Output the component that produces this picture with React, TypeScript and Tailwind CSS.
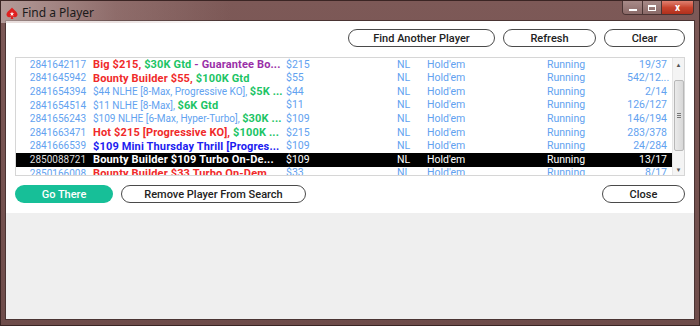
import { Fragment } from "react";

type Seg = { t: string; c: string; b?: boolean };
type Row = { id: string; name: Seg[]; buyin: string; players: string; sel?: boolean };

const BLUE = "text-[#62a2f0]";
const RED = "text-[#f02a2a]";
const GREEN = "text-[#20c465]";
const PURPLE = "text-[#9a2fa8]";
const DEEP = "text-[#1c1cf0]";

const rows: Row[] = [
  {
    id: "2841642117",
    name: [
      { t: "Big $215, ", c: RED, b: true },
      { t: "$30K Gtd", c: GREEN, b: true },
      { t: " - Guarantee Bo...", c: PURPLE, b: true },
    ],
    buyin: "$215",
    players: "19/37",
  },
  {
    id: "2841645942",
    name: [
      { t: "Bounty Builder $55, ", c: RED, b: true },
      { t: "$100K Gtd", c: GREEN, b: true },
    ],
    buyin: "$55",
    players: "542/12...",
  },
  {
    id: "2841654394",
    name: [
      { t: "$44 NLHE [8-Max, Progressive KO], ", c: BLUE },
      { t: "$5K ...", c: GREEN, b: true },
    ],
    buyin: "$44",
    players: "2/14",
  },
  {
    id: "2841654514",
    name: [
      { t: "$11 NLHE [8-Max], ", c: BLUE },
      { t: "$6K Gtd", c: GREEN, b: true },
    ],
    buyin: "$11",
    players: "126/127",
  },
  {
    id: "2841656243",
    name: [
      { t: "$109 NLHE [6-Max, Hyper-Turbo], ", c: BLUE },
      { t: "$30K ...", c: GREEN, b: true },
    ],
    buyin: "$109",
    players: "146/194",
  },
  {
    id: "2841663471",
    name: [
      { t: "Hot $215 [Progressive KO], ", c: RED, b: true },
      { t: "$100K ...", c: GREEN, b: true },
    ],
    buyin: "$215",
    players: "283/378",
  },
  {
    id: "2841666539",
    name: [{ t: "$109 Mini Thursday Thrill [Progres...", c: DEEP, b: true }],
    buyin: "$109",
    players: "24/284",
  },
  {
    id: "2850088721",
    name: [{ t: "Bounty Builder $109 Turbo On-De...", c: "text-white", b: true }],
    buyin: "$109",
    players: "13/17",
    sel: true,
  },
  {
    id: "2850166008",
    name: [{ t: "Bounty Builder $33 Turbo On-Dem...", c: RED, b: true }],
    buyin: "$33",
    players: "8/17",
  },
];

function PillButton({ label, className }: { label: string; className: string }) {
  return (
    <button
      className={`h-[18px] rounded-full border border-[#4a4a4a] bg-white text-[11px] font-medium text-[#222] leading-none ${className}`}
    >
      {label}
    </button>
  );
}

function Spade() {
  return (
    <svg width="12" height="13" viewBox="0 0 12 13">
      <path
        d="M6 0.5 C4 3 0.5 5 0.5 7.6 C0.5 9.4 2 10.4 3.4 10.2 C4.2 10.1 4.9 9.7 5.3 9.2 L4.6 12 L7.4 12 L6.7 9.2 C7.1 9.7 7.8 10.1 8.6 10.2 C10 10.4 11.5 9.4 11.5 7.6 C11.5 5 8 3 6 0.5 Z"
        fill="#e02020"
      />
      <path d="M6 4.6 L6.6 6.3 L8.3 6.3 L6.9 7.3 L7.4 9 L6 8 L4.6 9 L5.1 7.3 L3.7 6.3 L5.4 6.3 Z" fill="#fff" />
    </svg>
  );
}

export default function App() {
  return (
    <div className="w-[700px] h-[326px] flex flex-col bg-gradient-to-b from-[#7d5957] to-[#6e4c4a] border border-[#3b2524]" style={{ fontFamily: "Roboto, sans-serif" }}>
      {}
      <div className="h-[19px] flex items-start relative">
        <div className="absolute left-0 top-0 h-[22px] w-[230px] bg-gradient-to-r from-[#d8c6c4]/60 via-[#b89a98]/30 to-transparent" />
        <div className="relative flex items-center gap-[4px] pl-[5px] pt-[3px]">
          <Spade />
          <span className="text-[12px] text-[#1a1a1a]" style={{ fontFamily: '"Noto Sans", sans-serif' }}>
            Find a Player
          </span>
        </div>
        <div className="ml-auto mr-[5px] flex h-[14px] rounded-b-[4px] border border-t-0 border-[#4a3433] overflow-hidden">
          <div className="w-[20px] flex items-center justify-center bg-gradient-to-b from-[#a88a88] to-[#8a6a68] border-r border-[#4a3433]">
            <div className="w-[8px] h-[2px] bg-white mt-[4px]" />
          </div>
          <div className="w-[19px] flex items-center justify-center bg-gradient-to-b from-[#a88a88] to-[#8a6a68] border-r border-[#4a3433]">
            <div className="w-[8px] h-[6px] border border-white border-t-2" />
          </div>
          <div className="w-[31px] flex items-center justify-center bg-gradient-to-b from-[#e08070] via-[#c8442e] to-[#b0301c] text-white text-[10px] font-bold leading-none">
            x
          </div>
        </div>
      </div>

      {}
      <div className="flex-1 mx-[4px] mb-[5px] border border-[#4a3433] flex flex-col bg-[#efefef]">
        <div className="bg-white h-[192px] flex flex-col px-[9px]">
          <div className="flex justify-end gap-[8px] pt-[8px]">
            <PillButton label="Find Another Player" className="w-[147px]" />
            <PillButton label="Refresh" className="w-[93px]" />
            <PillButton label="Clear" className="w-[81px]" />
          </div>

          {}
          <div className="mt-[10px] h-[119px] border border-[#d6d6d6] flex overflow-hidden">
            <div className="flex-1 overflow-hidden text-[10.5px] leading-none">
              {rows.map((r) => {
                const base = r.sel ? "text-white" : BLUE;
                return (
                  <div
                    key={r.id}
                    className={`h-[13.6px] flex items-center whitespace-nowrap ${r.sel ? "bg-black" : ""} ${base}`}
                  >
                    <span className={`w-[70px] text-right text-[10px] ${r.sel ? "text-[#dddddd]" : ""}`}>{r.id}</span>
                    <span className="w-[200px] pl-[7px] overflow-hidden">
                      {r.name.map((s, i) => (
                        <Fragment key={i}>
                          <span
                            className={`${s.c} ${s.b ? "font-bold text-[11px] tracking-[0.15px]" : "text-[10px]"}`}
                          >
                            {s.t}
                          </span>
                        </Fragment>
                      ))}
                    </span>
                    <span className="w-[111px]">{r.buyin}</span>
                    <span className="w-[30px]">NL</span>
                    <span className="w-[120px]">Hold'em</span>
                    <span className="w-[80px]">Running</span>
                    <span className="w-[40px] text-right">{r.players}</span>
                  </div>
                );
              })}
            </div>
            {}
            <div className="w-[12px] bg-[#f4f4f4] border-l border-[#e6e6e6] flex flex-col items-center">
              <div className="h-[12px] flex items-center justify-center text-[6px] text-[#555]">▲</div>
              <div className="mt-[10px] w-[10px] h-[71px] rounded-[2px] border border-[#b8b8b8] bg-gradient-to-r from-[#eaeaea] to-[#d8d8d8] flex items-center justify-center">
                <div className="flex flex-col gap-[1px]">
                  <div className="w-[4px] h-[1px] bg-[#777]" />
                  <div className="w-[4px] h-[1px] bg-[#777]" />
                  <div className="w-[4px] h-[1px] bg-[#777]" />
                </div>
              </div>
              <div className="mt-auto h-[12px] flex items-center justify-center text-[6px] text-[#555]">▼</div>
            </div>
          </div>

          {}
          <div className="flex items-center mt-[9px]">
            <button className="w-[98px] h-[18px] rounded-full bg-[#17bf98] text-white text-[11px] font-medium leading-none">
              Go There
            </button>
            <PillButton label="Remove Player From Search" className="ml-[8px] w-[185px]" />
            <PillButton label="Close" className="ml-auto w-[83px]" />
          </div>
        </div>
      </div>
    </div>
  );
}
